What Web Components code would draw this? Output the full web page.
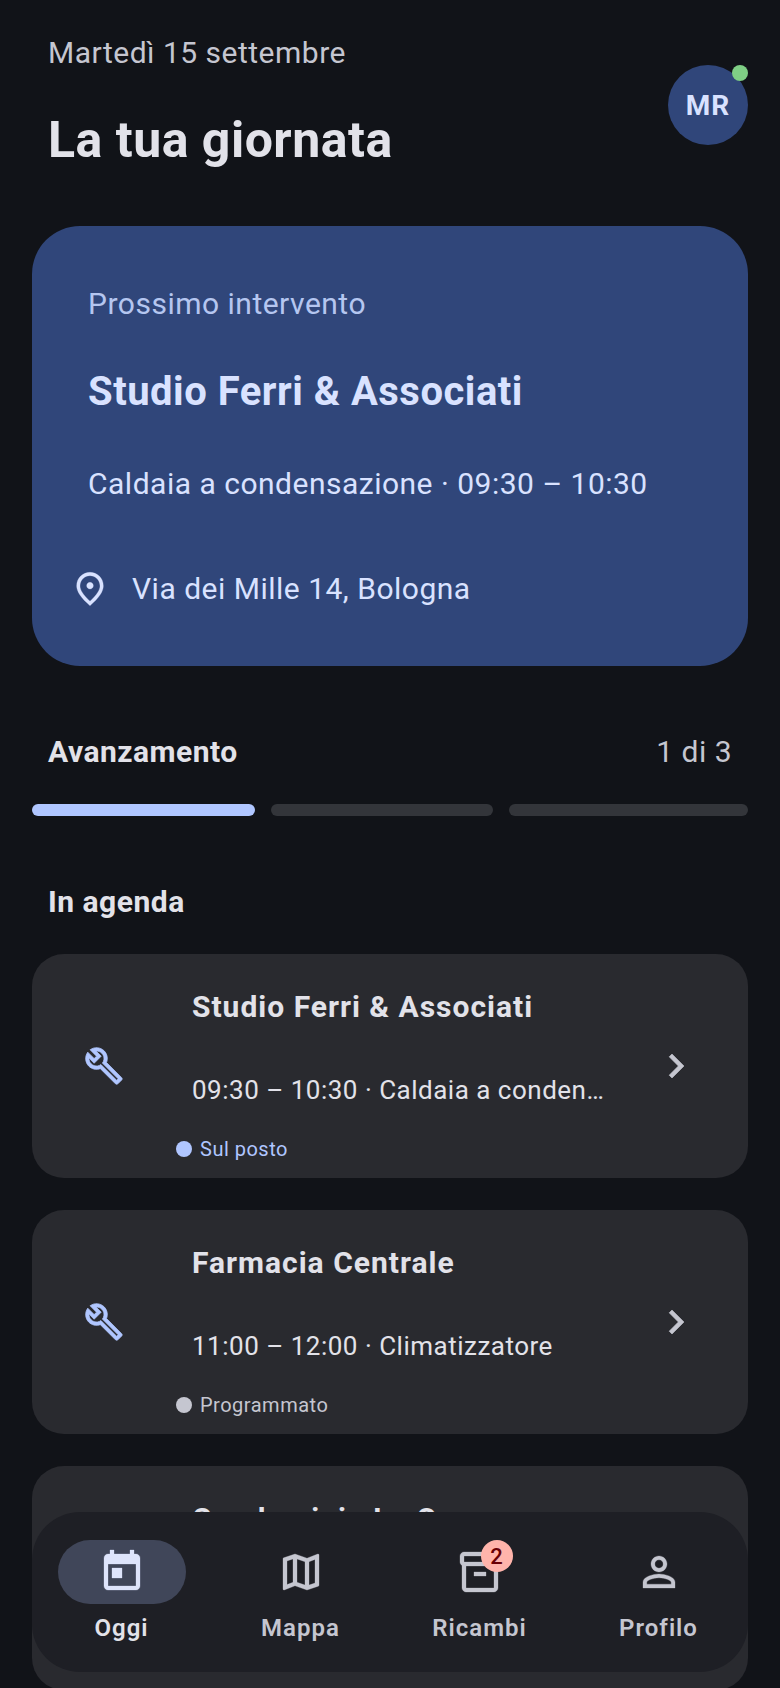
<!DOCTYPE html>
<html lang="it"><head><meta charset="utf-8"><title>La tua giornata</title>
<style>
html,body{margin:0;padding:0;height:1688px;overflow:hidden;background:#111318}
body{font-family:Roboto,"Liberation Sans",sans-serif;color:#e2e2e9}
</style></head><body>
<app-screen></app-screen>
<script>
const ICONS={
pin:'M12 12c-1.1 0-2-.9-2-2s.9-2 2-2 2 .9 2 2-.9 2-2 2zm6-1.8C18 6.57 15.35 4 12 4s-6 2.57-6 6.2c0 2.34 1.95 5.44 6 9.14 4.05-3.7 6-6.8 6-9.14zM12 2c4.2 0 8 3.22 8 8.2 0 3.32-2.67 7.25-8 11.8-5.33-4.55-8-8.48-8-11.8C4 5.22 7.8 2 12 2z',
build:'M22.61 18.99l-9.08-9.08c.93-2.34.45-5.1-1.44-7C9.79.61 6.21.4 3.66 2.26L7.5 6.11 6.08 7.52 2.25 3.69C.39 6.23.6 9.82 2.9 12.11c1.86 1.86 4.57 2.35 6.89 1.48l9.11 9.11c.39.39 1.02.39 1.41 0l2.3-2.3c.4-.39.4-1.02 0-1.41zM19.61 20.59l-9.46-9.46c-.61.45-1.29.72-2 .82-1.36.2-2.79-.21-3.83-1.25C3.37 9.76 2.93 8.5 3 7.26l3.09 3.09 4.24-4.24-3.09-3.09c1.24-.07 2.49.37 3.44 1.31 1.08 1.08 1.49 2.57 1.24 3.96-.12.71-.42 1.37-.88 1.96l9.45 9.45-.88.87z',
chevron:'M10 6L8.59 7.41 13.17 12l-4.58 4.59L10 18l6-6z',
today:'M19 3h-1V1h-2v2H8V1H6v2H5c-1.11 0-1.99.9-1.99 2L3 19c0 1.1.89 2 2 2h14c1.1 0 2-.9 2-2V5c0-1.1-.9-2-2-2zm0 16H5V8h14v11zM7 10h5v5H7z',
map:'M20.5 3l-.16.03L15 5.1 9 3 3.36 4.9c-.21.07-.36.25-.36.48V20.5c0 .28.22.5.5.5l.16-.03L9 18.9l6 2.1 5.64-1.9c.21-.07.36-.25.36-.48V3.5c0-.28-.22-.5-.5-.5zM10 5.47l4 1.4v11.66l-4-1.4V5.47zm-5 .99l3-1.01v11.7l-3 1.16V6.46zm14 11.08l-3 1.01V6.86l3-1.16v11.84z',
box:'M20 2H4c-1 0-2 .9-2 2v3.01c0 .72.43 1.34 1 1.69V20c0 1.1 1.1 2 2 2h14c.9 0 2-.9 2-2V8.7c.57-.35 1-.97 1-1.69V4c0-1.1-1-2-2-2zm-1 18H5V9h14v11zm1-13H4V4h16v3zM9 12h6v2H9z',
person:'M12 5.9c1.16 0 2.1.94 2.1 2.1s-.94 2.1-2.1 2.1S9.9 9.16 9.9 8s.94-2.1 2.1-2.1m0 9c2.97 0 6.1 1.46 6.1 2.1v1.1H5.9V17c0-.64 3.13-2.1 6.1-2.1M12 4C9.79 4 8 5.79 8 8s1.79 4 4 4 4-1.79 4-4-1.79-4-4-4zm0 9c-2.67 0-8 1.34-8 4v3h16v-3c0-2.66-5.33-4-8-4z'
};
function def(name,css,html){
  customElements.define(name,class extends HTMLElement{
    connectedCallback(){
      if(this.shadowRoot)return;
      const r=this.attachShadow({mode:'open'});
      const a=n=>this.getAttribute(n)||'';
      r.innerHTML='<style>'+css+'</style>'+(typeof html==='function'?html(a):html);
    }
  });
}
def('m-icon',':host{display:block;flex:none;width:var(--s,48px);height:var(--s,48px);color:inherit}svg{display:block;width:100%;height:100%;fill:currentColor;stroke:currentColor;stroke-width:var(--w,.15)}',
 a=>`<svg viewBox="0 0 24 24" aria-hidden="true"><path d="${ICONS[a('name')]}"/></svg>`);
def('day-header',`:host{display:flex;justify-content:space-between;padding:0 32px 0 48px;height:226px;box-sizing:border-box}
 .date{font-size:30px;line-height:40px;color:#c5c6d0;padding-top:33px;letter-spacing:.5px}
 h1{margin:37px 0 0;font-size:50px;line-height:60px;font-weight:700;color:#e2e2e9;letter-spacing:.5px}
 .av{position:relative;width:80px;height:80px;margin-top:65px;border-radius:50%;background:#30467a;color:#d9e2ff;display:flex;align-items:center;justify-content:center;font-size:28px;font-weight:700;letter-spacing:1px}
 .dot{position:absolute;top:0;right:0;width:16px;height:16px;border-radius:50%;background:#7fcf85}`,
 `<div><div class="date">Martedì 15 settembre</div><h1>La tua giornata</h1></div><div class="av">MR<span class="dot"></span></div>`);
def('hero-card',`:host{display:block;margin:0 32px;height:440px;box-sizing:border-box;background:#30467a;border-radius:48px;padding:58px 56px 0;color:#d9e2ff}
 .k{font-size:30px;line-height:40px;color:#b5c6f0;letter-spacing:.5px}
 .t{font-size:40px;line-height:48px;font-weight:700;margin-top:44px;letter-spacing:.5px}
 .s{font-size:30px;line-height:40px;margin-top:48px;letter-spacing:.5px}
 .a{display:flex;align-items:center;gap:22px;margin:65px 0 0 -18px;font-size:30px;line-height:40px;letter-spacing:.5px}
 m-icon{--s:40px}`,
 `<div class="k">Prossimo intervento</div><div class="t">Studio Ferri &amp; Associati</div><div class="s">Caldaia a condensazione · 09:30 – 10:30</div><div class="a"><m-icon name="pin"></m-icon><span>Via dei Mille 14, Bologna</span></div>`);
def('progress-bar',`:host{display:block;padding:0 32px;margin-top:66px}
 .h{display:flex;justify-content:space-between;padding:0 16px;font-size:30px;line-height:40px;letter-spacing:.5px}
 .h b{font-weight:700;color:#e2e2e9}.h span{color:#c5c6d0}
 .b{display:grid;grid-template-columns:223px 222px 1fr;gap:16px;margin-top:32px}
 .b i{display:block;height:12px;border-radius:6px;background:#33353a}.b i.on{background:#b0c6ff}`,
 `<div class="h"><b>Avanzamento</b><span>1 di 3</span></div><div class="b"><i class="on"></i><i></i><i></i></div>`);
def('agenda-title',`:host{display:block;padding:0 48px;margin-top:66px;font-size:30px;line-height:40px;font-weight:700;color:#e2e2e9;letter-spacing:.5px}`,`<slot></slot>`);
def('job-card',`:host{display:flex;align-items:center;height:224px;box-sizing:border-box;margin:0 32px;background:#292a2f;border-radius:32px;position:relative}
 .i{margin-left:52px;color:#b0c6ff;--s:40px;--w:.45;margin-right:68px}
 .c{width:416px;flex:none;align-self:flex-start;padding-top:33px}
 .t{font-size:30px;line-height:40px;font-weight:700;color:#e2e2e9;letter-spacing:1px}
 .s{font-size:26px;line-height:36px;margin-top:45px;color:#e2e2e9;letter-spacing:.5px;white-space:nowrap;overflow:hidden;text-overflow:ellipsis}
 .st{display:flex;align-items:center;gap:8px;margin:27px 0 0 -16px;font-size:20px;line-height:28px;letter-spacing:.5px;color:var(--st)}
 .st i{width:16px;height:16px;border-radius:50%;background:var(--st)}
 .ch{margin-left:44px;color:#c5c6d0;--s:48px;--w:.3}`,
 a=>`<m-icon class="i" name="build"></m-icon><div class="c"><div class="t">${a('name')}</div><div class="s">${a('info')}</div><div class="st" style="--st:${a('color')}"><i></i><span>${a('status')}</span></div></div><m-icon class="ch" name="chevron"></m-icon>`);
def('nav-item',`:host{display:flex;flex-direction:column;align-items:center;flex:1;position:relative;color:#c5c6d0}
 .p{width:128px;height:64px;border-radius:32px;display:flex;align-items:center;justify-content:center;position:relative}
 :host([active]) .p{background:#404659;color:#dee4fb}
 :host([active]){color:#e2e2e9}
 .l{margin-top:8px;font-size:24px;line-height:32px;font-weight:600;letter-spacing:1px}
 .bd{position:absolute;left:calc(50% + 1px);top:0;width:32px;height:32px;border-radius:50%;background:#ffb4ab;color:#690005;font-size:22px;font-weight:500;display:flex;align-items:center;justify-content:center}`,
 a=>`<div class="p"><m-icon name="${a('icon')}"></m-icon>${a('badge')?`<span class="bd">${a('badge')}</span>`:''}</div><div class="l">${a('label')}</div>`);
def('bottom-nav',`:host{position:absolute;left:32px;top:1512px;width:716px;height:160px;box-sizing:border-box;background:#1e1f25;border-radius:48px;display:flex;padding-top:28px}`,`<slot></slot>`);
def('app-screen',`:host{display:block;position:relative;width:780px;height:1688px;overflow:hidden;background:#111318}
 .list{display:flex;flex-direction:column;gap:32px;margin-top:32px}`,
 `<day-header></day-header><hero-card></hero-card><progress-bar></progress-bar><agenda-title>In agenda</agenda-title>
 <div class="list">
 <job-card name="Studio Ferri &amp; Associati" info="09:30 – 10:30 · Caldaia a condensazione" status="Sul posto" color="#b0c6ff"></job-card>
 <job-card name="Farmacia Centrale" info="11:00 – 12:00 · Climatizzatore" status="Programmato" color="#c5c6d0"></job-card>
 <job-card name="Condominio Le Querce" info="14:30 – 15:30 · Caldaia" status="Programmato" color="#c5c6d0"></job-card>
 </div>
 <bottom-nav><nav-item active icon="today" label="Oggi"></nav-item><nav-item icon="map" label="Mappa"></nav-item><nav-item icon="box" label="Ricambi" badge="2"></nav-item><nav-item icon="person" label="Profilo"></nav-item></bottom-nav>`);
</script>
</body></html>
